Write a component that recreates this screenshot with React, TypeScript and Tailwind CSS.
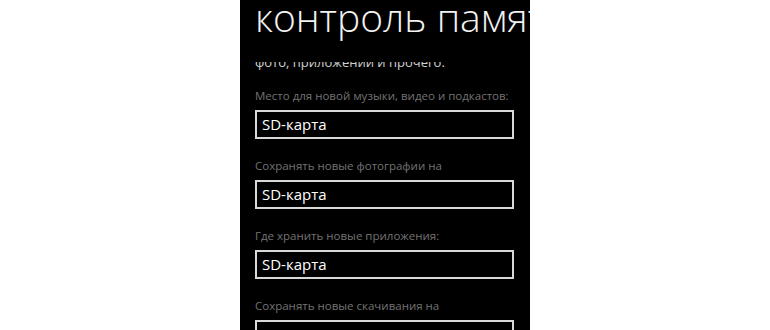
const SECTIONS = [
  { label: 'Место для новой музыки, видео и подкастов:', value: 'SD-карта' },
  { label: 'Сохранять новые фотографии на', value: 'SD-карта' },
  { label: 'Где хранить новые приложения:', value: 'SD-карта' },
  { label: 'Сохранять новые скачивания на', value: 'SD-карта' },
];

function Picker({ label, value }: { label: string; value: string }) {
  return (
    <div className="flex flex-col">
      <span className="text-[11.5px] leading-[18px] text-[#737373] whitespace-nowrap">{label}</span>
      <div className="mt-[5px] h-[29px] w-[259px] border-2 border-[#d9d9d9] px-[5px] flex items-center">
        <span className="text-[15px] leading-none text-white">{value}</span>
      </div>
    </div>
  );
}

export default function App() {
  return (
    <div className="w-[770px] h-[330px] bg-white flex" style={{ fontFamily: '"Open Sans", "Noto Sans", sans-serif' }}>
      <div className="ml-[240px] w-[290px] h-[330px] bg-black overflow-hidden pl-[15px]">
        <h1 className="text-[39px] leading-[46px] font-light text-[#f2f2f2] whitespace-nowrap -mt-[6px]">
          контроль памяти
        </h1>
        {/* description scrolled under the title */}
        <div className="mt-[22px] h-[11px] overflow-hidden">
          <p className="-mt-[10px] text-[13px] leading-[20px] text-[#d0d0d0] whitespace-nowrap">
            фото, приложений и прочего.
          </p>
        </div>
        <div className="mt-[14px] flex flex-col gap-[18px]">
          {SECTIONS.map((s, i) => (
            <Picker key={i} label={s.label} value={s.value} />
          ))}
        </div>
      </div>
    </div>
  );
}
